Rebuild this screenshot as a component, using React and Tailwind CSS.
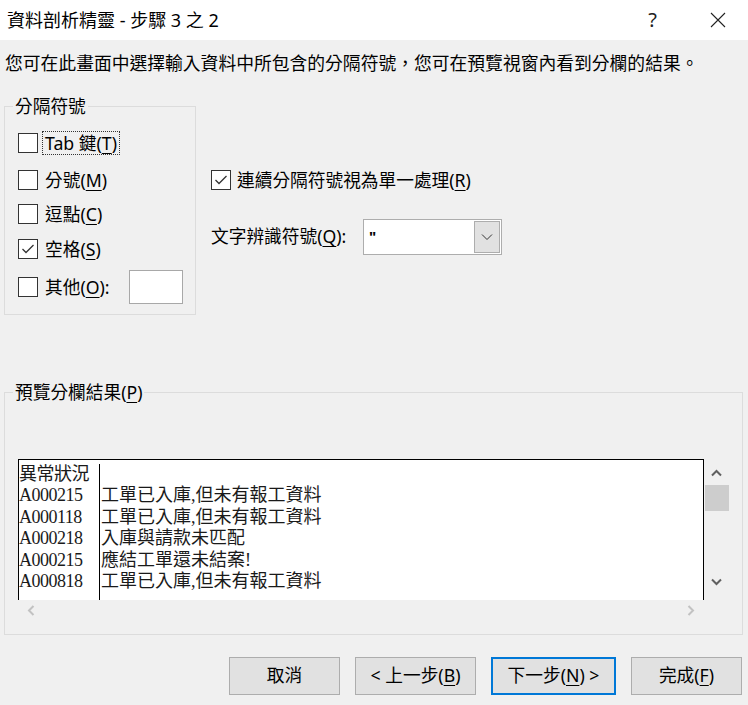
import React from 'react';

const ui = 'font-["Noto_Sans","Noto_Sans_CJK_TC",sans-serif]';

const Check = ({ checked }) => (
  <span className="w-[20px] h-[20px] shrink-0 border border-[#333333] bg-white flex items-center justify-center">
    {checked && (
      <svg width="16" height="16" viewBox="0 0 16 16">
        <polyline points="2.5,8 6,11.5 13.5,4" fill="none" stroke="#333333" strokeWidth="1.3" />
      </svg>
    )}
  </span>
);

const Label = ({ text, hot, after = '' }) => (
  <span>
    {text}(<u className="underline-offset-[3px]">{hot}</u>){after}
  </span>
);

const rows = [
  ['異常狀況', ''],
  ['A000215', '工單已入庫,但未有報工資料'],
  ['A000118', '工單已入庫,但未有報工資料'],
  ['A000218', '入庫與請款未匹配'],
  ['A000215', '應結工單還未結案!'],
  ['A000818', '工單已入庫,但未有報工資料'],
];

const Button = ({ children, width, focused }) => (
  <button
    className={
      focused
        ? `${width} h-[38px] bg-[#e1e1e1] border-2 border-[#0078d7] text-[17.7px] leading-none text-black`
        : `${width} h-[38px] bg-[#e1e1e1] border border-[#adadad] text-[17.7px] leading-none text-black`
    }
  >
    {children}
  </button>
);

export default function App() {
  return (
    <div className={`${ui} w-[748px] h-[705px] bg-[#f0f0f0] text-black flex flex-col overflow-hidden`}>
      {/* title bar */}
      <div className="h-[40px] bg-white flex items-center shrink-0">
        <span className="pl-[7px] text-[18px] leading-none">資料剖析精靈 - 步驟 3 之 2</span>
        <span className="ml-auto mr-[53px] text-[20px] leading-none text-[#222]">?</span>
        <svg className="mr-[22px]" width="16" height="16" viewBox="0 0 16 16">
          <path d="M1 1L15 15M15 1L1 15" stroke="#222" strokeWidth="1.1" />
        </svg>
      </div>

      <p className="mt-[11px] pl-[5px] text-[17.8px] leading-[24px] whitespace-nowrap">
        您可在此畫面中選擇輸入資料中所包含的分隔符號，您可在預覽視窗內看到分欄的結果。
      </p>

      {/* delimiters + options */}
      <div className="flex mt-[31px] shrink-0">
        <div className="relative ml-[4px] w-[192px] h-[209px] border border-[#dcdcdc] pl-[13px] pt-[26px]">
          <span className="absolute -top-[12px] left-[8px] px-[2px] bg-[#f0f0f0] text-[17.7px] leading-[22px]">分隔符號</span>
          <div className="flex items-center h-[20px]">
            <Check />
            <span className="ml-[4px] px-[2px] border border-dotted border-[#333] text-[17.7px] leading-[22px]">
              <Label text="Tab 鍵" hot="T" />
            </span>
          </div>
          <div className="flex items-center h-[20px] mt-[17px] gap-[7px] text-[17.7px]">
            <Check /><Label text="分號" hot="M" />
          </div>
          <div className="flex items-center h-[20px] mt-[14px] gap-[7px] text-[17.7px]">
            <Check /><Label text="逗點" hot="C" />
          </div>
          <div className="flex items-center h-[20px] mt-[15px] gap-[7px] text-[17.7px]">
            <Check checked /><Label text="空格" hot="S" />
          </div>
          <div className="flex items-center h-[20px] mt-[18px] gap-[7px] text-[17.7px]">
            <Check /><Label text="其他" hot="O" after=":" />
            <span className="ml-[12px] w-[54px] h-[34px] shrink-0 bg-white border border-[#a8a8a8]" />
          </div>
        </div>

        <div className="ml-[15px] pt-[61px] flex flex-col">
          <div className="flex items-center gap-[6px] text-[17.7px]">
            <Check checked /><Label text="連續分隔符號視為單一處理" hot="R" />
          </div>
          <div className="flex items-center mt-[25px] text-[17.7px]">
            <span className="w-[152px]"><Label text="文字辨識符號" hot="Q" after=":" /></span>
            <div className="w-[139px] h-[36px] bg-white border border-[#adadad] flex items-center p-[1px]">
              <span className="flex-1 pl-[4px] text-[15px] font-bold leading-none">"</span>
              <span className="w-[26px] h-[32px] bg-[#e1e1e1] border border-[#adadad] flex items-center justify-center">
                <svg width="12" height="8" viewBox="0 0 12 8">
                  <polyline points="1,1.5 6,6.5 11,1.5" fill="none" stroke="#333" strokeWidth="1" />
                </svg>
              </span>
            </div>
          </div>
        </div>
      </div>

      {/* preview */}
      <div className="relative ml-[4px] mt-[77px] w-[739px] h-[243px] border border-[#dcdcdc] pl-[13px] pt-[66px] shrink-0">
        <span className="absolute -top-[12px] left-[8px] px-[2px] bg-[#f0f0f0] text-[17.7px] leading-[22px]">
          <Label text="預覽分欄結果" hot="P" />
        </span>
        <div className="grid grid-cols-[686px_25px] grid-rows-[141px_20px]">
          <div className="bg-white border-t border-x border-black overflow-hidden pt-[4px] font-['Liberation_Serif','Noto_Sans_CJK_TC',serif] text-[18px] leading-[21.4px] text-[#1a1a1a]">
            <div className="grid grid-cols-[81px_1fr] h-full">
              <div className="border-r border-black">
                {rows.map((r, i) => (
                  <div key={i} className="whitespace-nowrap tracking-[-0.5px]">{r[0]}</div>
                ))}
              </div>
              <div className="pl-[1px]">
                {rows.map((r, i) => (
                  <div key={i} className="whitespace-nowrap h-[21.4px]">{r[1]}</div>
                ))}
              </div>
            </div>
          </div>
          <div className="flex flex-col items-center">
            <svg className="mt-[10px]" width="11" height="8" viewBox="0 0 11 8">
              <polyline points="1,6.5 5.5,2 10,6.5" fill="none" stroke="#606060" strokeWidth="2" />
            </svg>
            <div className="mt-[8px] ml-[1px] w-[24px] h-[26px] bg-[#cdcdcd]" />
            <svg className="mt-[67px]" width="11" height="8" viewBox="0 0 11 8">
              <polyline points="1,1.5 5.5,6 10,1.5" fill="none" stroke="#606060" strokeWidth="2" />
            </svg>
          </div>
          <div className="flex items-center justify-between px-[9px]">
            <svg width="8" height="11" viewBox="0 0 8 11">
              <polyline points="6.5,1 2,5.5 6.5,10" fill="none" stroke="#c2c2c2" strokeWidth="2" />
            </svg>
            <svg width="8" height="11" viewBox="0 0 8 11">
              <polyline points="1.5,1 6,5.5 1.5,10" fill="none" stroke="#c2c2c2" strokeWidth="2" />
            </svg>
          </div>
        </div>
      </div>

      {/* buttons */}
      <div className="flex mt-[22px] ml-[229px] gap-[15px]">
        <Button width="w-[111px]">取消</Button>
        <Button width="w-[121px]">&lt; 上一步(<u className="underline-offset-[3px]">B</u>)</Button>
        <Button width="w-[125px]" focused>下一步(<u className="underline-offset-[3px]">N</u>) &gt;</Button>
        <Button width="w-[111px]">完成(<u className="underline-offset-[3px]">F</u>)</Button>
      </div>
    </div>
  );
}
